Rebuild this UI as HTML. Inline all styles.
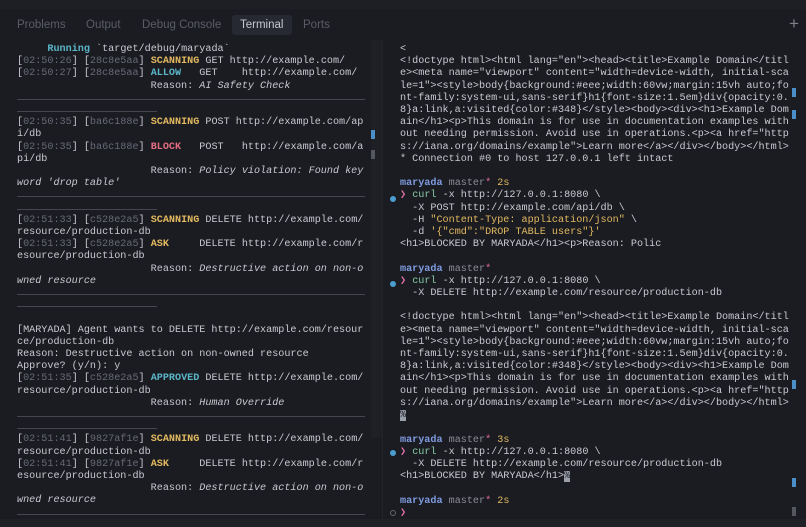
<!DOCTYPE html>
<html><head><meta charset="utf-8"><style>
*{margin:0;padding:0;box-sizing:border-box}
body{width:806px;height:527px;background:#1b1c21;overflow:hidden;position:relative;font-family:"Liberation Mono",monospace;color:#c8cad1}
.top{position:absolute;left:0;top:0;width:806px;height:9px;background:#1e1f25}
.bot{position:absolute;left:0;top:519px;width:806px;height:8px;background:#202127}
.tabs{position:absolute;top:19px;left:0;font-family:"Liberation Sans",sans-serif;font-size:11.5px;color:#5a5d68}
.tabs span{position:absolute;top:0;white-space:nowrap}
.term{position:absolute;left:232px;top:15px;width:60px;height:20px;background:#272932;border-radius:3px}
.plus{position:absolute;left:789px;top:14px;font-family:"Liberation Sans",sans-serif;font-size:17px;color:#7d8089}
.pane{position:absolute;top:44px;font-size:10.15px;line-height:12.2px;white-space:pre}
.l{left:17px}.r{left:400px}
.t{color:#666a77}
.y{color:#e2b960;font-weight:bold}
.c{color:#5bb6c9;font-weight:bold}
.rd{color:#e26d82;font-weight:bold}
.i{font-style:italic}
.d{height:12.2px;position:relative}
.d::after{content:"";position:absolute;left:0;top:6px;height:1px;background:#45474f}
.d1::after{width:348px}.d2::after{width:140px}
.b{color:#7f9be0;font-weight:bold}.m{color:#8a8d96}.s{color:#e26d99}.ys{color:#e2b960}.g{color:#86c9a6}.q{color:#e2b960}.p{color:#e070a8;font-weight:bold}
.cur{background:#9aa0aa;color:#1b1c21}
.track{position:absolute;left:371px;top:40px;width:11px;height:398px;background:#1f2026}
.sep{position:absolute;left:382px;top:40px;width:1px;height:479px;background:#23242a}
.mk{position:absolute;width:4px;height:9px}
.dot{position:absolute;width:6px;height:6px;border-radius:3px;left:390px}
</style></head><body>
<div class="top"></div>
<div class="term"></div>
<div class="tabs">
<span style="left:17px">Problems</span><span style="left:86px">Output</span><span style="left:142px">Debug Console</span>
<span style="left:240px;color:#c4c7cf">Terminal</span><span style="left:303px">Ports</span></div>
<div class="plus">+</div>
<div class="track"></div><div class="sep"></div>
<div class="mk" style="left:371px;top:130px;background:#4a8fc8"></div>
<div class="mk" style="left:371px;top:150px;background:#55575e"></div>
<div class="mk" style="left:792px;top:88px;background:#4a8fc8"></div>
<div class="mk" style="left:792px;top:110px;background:#4a8fc8"></div>
<div class="mk" style="left:792px;top:380px;background:#4a8fc8"></div>
<div class="mk" style="left:792px;top:478px;background:#4a8fc8"></div>
<div class="mk" style="left:792px;top:507px;background:#55575e"></div>
<div class="pane l">     <span class="c">Running</span> `target/debug/maryada`
[<span class="t">02:50:26</span>] [<span class="t">28c8e5aa</span>] <span class="y">SCANNING</span> GET http://example.com/
[<span class="t">02:50:27</span>] [<span class="t">28c8e5aa</span>] <span class="c">ALLOW</span>   GET    http://example.com/
                      Reason: <span class="i">AI Safety Check</span>
<div class="d d1"></div><div class="d d2"></div>[<span class="t">02:50:35</span>] [<span class="t">ba6c188e</span>] <span class="y">SCANNING</span> POST http://example.com/ap
i/db
[<span class="t">02:50:35</span>] [<span class="t">ba6c188e</span>] <span class="rd">BLOCK</span>   POST   http://example.com/a
pi/db
                      Reason: <span class="i">Policy violation: Found key</span>
<span class="i">word 'drop table'</span>
<div class="d d1"></div><div class="d d2"></div>[<span class="t">02:51:33</span>] [<span class="t">c528e2a5</span>] <span class="y">SCANNING</span> DELETE http://example.com/
resource/production-db
[<span class="t">02:51:33</span>] [<span class="t">c528e2a5</span>] <span class="y">ASK</span>     DELETE http://example.com/r
esource/production-db
                      Reason: <span class="i">Destructive action on non-o</span>
<span class="i">wned resource</span>
<div class="d d1"></div><div class="d d2"></div>
[MARYADA] Agent wants to DELETE http://example.com/resour
ce/production-db
Reason: Destructive action on non-owned resource
Approve? (y/n): y
[<span class="t">02:51:35</span>] [<span class="t">c528e2a5</span>] <span class="c">APPROVED</span> DELETE http://example.com/
resource/production-db
                      Reason: <span class="i">Human Override</span>
<div class="d d1"></div><div class="d d2"></div>[<span class="t">02:51:41</span>] [<span class="t">9827af1e</span>] <span class="y">SCANNING</span> DELETE http://example.com/
resource/production-db
[<span class="t">02:51:41</span>] [<span class="t">9827af1e</span>] <span class="y">ASK</span>     DELETE http://example.com/r
esource/production-db
                      Reason: <span class="i">Destructive action on non-o</span>
<span class="i">wned resource</span>
<div class="d d1"></div></div>
<div class="dot" style="top:196px;background:#4a9fd0"></div>
<div class="dot" style="top:281px;background:#4a9fd0"></div>
<div class="dot" style="top:450px;background:#4a9fd0"></div>
<div class="dot" style="top:510px;border:1px solid #666"></div>
<div class="pane r">&lt;
&lt;!doctype html&gt;&lt;html lang="en"&gt;&lt;head&gt;&lt;title&gt;Example Domain&lt;/titl
e&gt;&lt;meta name="viewport" content="width=device-width, initial-sca
le=1"&gt;&lt;style&gt;body{background:#eee;width:60vw;margin:15vh auto;fo
nt-family:system-ui,sans-serif}h1{font-size:1.5em}div{opacity:0.
8}a:link,a:visited{color:#348}&lt;/style&gt;&lt;body&gt;&lt;div&gt;&lt;h1&gt;Example Dom
ain&lt;/h1&gt;&lt;p&gt;This domain is for use in documentation examples with
out needing permission. Avoid use in operations.&lt;p&gt;&lt;a href="http
s://iana.org/domains/example"&gt;Learn more&lt;/a&gt;&lt;/div&gt;&lt;/body&gt;&lt;/html&gt;
* Connection #0 to host 127.0.0.1 left intact

<span class="b">maryada</span> <span class="m">master</span><span class="s">*</span> <span class="ys">2s</span>
<span class="p">❯</span> <span class="g">curl</span> -x http://127.0.0.1:8080 \
  -X POST http://example.com/api/db \
  -H <span class="q">"Content-Type: application/json"</span> \
  -d <span class="q">'{"cmd":"DROP TABLE users"}'</span>
&lt;h1&gt;BLOCKED BY MARYADA&lt;/h1&gt;&lt;p&gt;Reason: Polic

<span class="b">maryada</span> <span class="m">master</span><span class="s">*</span>
<span class="p">❯</span> <span class="g">curl</span> -x http://127.0.0.1:8080 \
  -X DELETE http://example.com/resource/production-db

&lt;!doctype html&gt;&lt;html lang="en"&gt;&lt;head&gt;&lt;title&gt;Example Domain&lt;/titl
e&gt;&lt;meta name="viewport" content="width=device-width, initial-sca
le=1"&gt;&lt;style&gt;body{background:#eee;width:60vw;margin:15vh auto;fo
nt-family:system-ui,sans-serif}h1{font-size:1.5em}div{opacity:0.
8}a:link,a:visited{color:#348}&lt;/style&gt;&lt;body&gt;&lt;div&gt;&lt;h1&gt;Example Dom
ain&lt;/h1&gt;&lt;p&gt;This domain is for use in documentation examples with
out needing permission. Avoid use in operations.&lt;p&gt;&lt;a href="http
s://iana.org/domains/example"&gt;Learn more&lt;/a&gt;&lt;/div&gt;&lt;/body&gt;&lt;/html&gt;
<span class="cur">%</span>

<span class="b">maryada</span> <span class="m">master</span><span class="s">*</span> <span class="ys">3s</span>
<span class="p">❯</span> <span class="g">curl</span> -x http://127.0.0.1:8080 \
  -X DELETE http://example.com/resource/production-db
&lt;h1&gt;BLOCKED BY MARYADA&lt;/h1&gt;<span class="cur">%</span>

<span class="b">maryada</span> <span class="m">master</span><span class="s">*</span> <span class="ys">2s</span>
<span class="p">❯</span></div>
<div class="bot"></div>
</body></html>
